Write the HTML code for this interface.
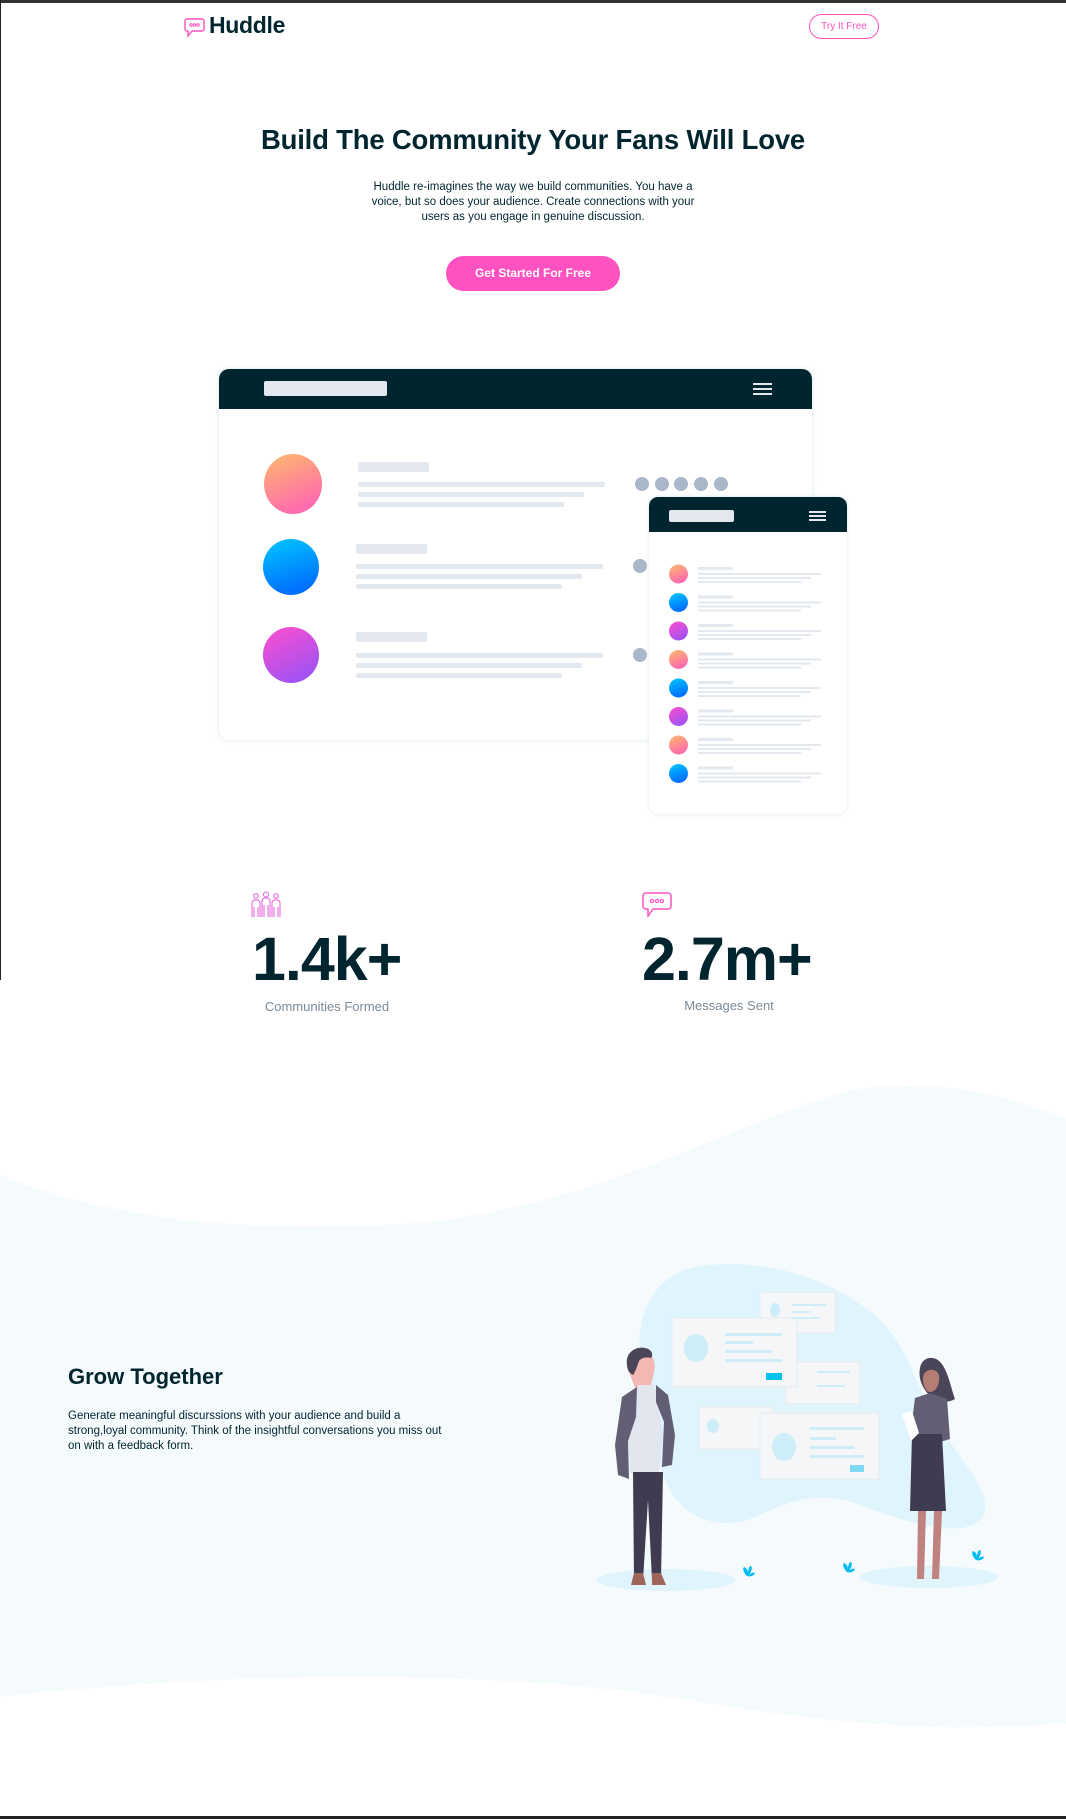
<!DOCTYPE html>
<html><head><meta charset="utf-8"><style>
*{margin:0;padding:0;box-sizing:border-box}
html,body{width:1066px;height:1819px;background:#fff;overflow:hidden;position:relative;font-family:"Liberation Sans",sans-serif;color:#00252e}
.a{position:absolute}
</style></head><body>
<svg class="a" style="left:0;top:0" width="1066" height="1819">
<path d="M0 1175 C120 1222 250 1232 400 1224 C600 1212 750 1110 864 1088 C950 1078 1010 1098 1066 1118 L1066 1724 C950 1730 870 1730 700 1702 C550 1676 300 1664 0 1697 Z" fill="#f5fafd"/>
<rect x="0" y="0" width="1066" height="3" fill="#333"/>
<rect x="0" y="0" width="1" height="980" fill="#222"/>
<rect x="0" y="1816" width="1066" height="3" fill="#222"/>
</svg>

<svg class="a" style="left:184px;top:17px" width="22" height="22" viewBox="0 0 22 22"><path d="M3 2h15a2 2 0 0 1 2 2v8a2 2 0 0 1-2 2H8l-4 5v-5H3a2 2 0 0 1-2-2V4a2 2 0 0 1 2-2z" fill="none" stroke="#ff52c1" stroke-width="1.4"/><circle cx="7" cy="8" r="1.2" fill="none" stroke="#ff52c1"/><circle cx="10.5" cy="8" r="1.2" fill="none" stroke="#ff52c1"/><circle cx="14" cy="8" r="1.2" fill="none" stroke="#ff52c1"/></svg>
<div class="a" style="left:209px;top:12px;font-size:23px;font-weight:bold;letter-spacing:-0.3px">Huddle</div>
<div class="a" style="left:809px;top:14px;width:70px;height:25px;border:1px solid #ff52c1;border-radius:13px;color:#ff52c1;font-size:10px;text-align:center;line-height:23px">Try It Free</div>

<div class="a" style="left:0;width:1066px;top:124px;text-align:center;font-size:27.5px;font-weight:bold;letter-spacing:-0.2px">Build The Community Your Fans Will Love</div>
<div class="a" style="left:358px;width:350px;top:180px;text-align:center;font-size:11.5px;line-height:15px;color:#00252e">Huddle re-imagines the way we build communities. You have a voice, but so does your audience. Create connections with your users as you engage in genuine discussion.</div>
<div class="a" style="left:446px;top:256px;width:174px;height:35px;background:#ff52c1;border-radius:18px;color:#fff;font-size:12px;font-weight:bold;text-align:center;line-height:35px">Get Started For Free</div>

<svg class="a" style="left:0;top:0" width="1066" height="900">
<defs>
<linearGradient id="g1" x1="0" y1="0" x2="0.4" y2="1"><stop offset="0" stop-color="#ffba6b"/><stop offset="1" stop-color="#ff6bad"/></linearGradient>
<linearGradient id="g2" x1="0" y1="0" x2="0.3" y2="1"><stop offset="0" stop-color="#00c7ff"/><stop offset="1" stop-color="#0070ff"/></linearGradient>
<linearGradient id="g3" x1="0" y1="0" x2="0.5" y2="1"><stop offset="0" stop-color="#ff4fcc"/><stop offset="1" stop-color="#a352f3"/></linearGradient>
<filter id="sh" x="-5%" y="-5%" width="110%" height="110%"><feDropShadow dx="0" dy="0" stdDeviation="2" flood-color="#cfe0e8" flood-opacity="0.8"/></filter>
</defs>
<g filter="url(#sh)"><rect x="219" y="369" width="593" height="371" rx="10" fill="#fff"/></g>
<path d="M229 369h573a10 10 0 0 1 10 10v30H219v-30a10 10 0 0 1 10-10z" fill="#00252e"/>
<rect x="264" y="381" width="123" height="15" rx="2" fill="#e3e8ee"/>
<g fill="#e3e8ee"><rect x="753" y="383" width="19" height="2"/><rect x="753" y="388" width="19" height="2"/><rect x="753" y="393" width="19" height="2"/></g>
<ellipse cx="293" cy="484" rx="29" ry="30" fill="url(#g1)"/>
<ellipse cx="291" cy="567" rx="28" ry="28" fill="url(#g2)"/>
<ellipse cx="291" cy="655" rx="28" ry="28" fill="url(#g3)"/>
<g fill="#e3e8ee">
<rect x="358" y="462" width="71" height="10" rx="2"/><rect x="358" y="482" width="247" height="5" rx="2"/><rect x="358" y="492" width="226" height="5" rx="2"/><rect x="358" y="502" width="206" height="5" rx="2"/>
<rect x="356" y="544" width="71" height="10" rx="2"/><rect x="356" y="564" width="247" height="5" rx="2"/><rect x="356" y="574" width="226" height="5" rx="2"/><rect x="356" y="584" width="206" height="5" rx="2"/>
<rect x="356" y="632" width="71" height="10" rx="2"/><rect x="356" y="653" width="247" height="5" rx="2"/><rect x="356" y="663" width="226" height="5" rx="2"/><rect x="356" y="673" width="206" height="5" rx="2"/>
</g>
<g fill="#a9b8c8"><circle cx="642" cy="484" r="7"/><circle cx="662" cy="484" r="7"/><circle cx="681" cy="484" r="7"/><circle cx="701" cy="484" r="7"/><circle cx="721" cy="484" r="7"/><circle cx="640" cy="566" r="7"/><circle cx="640" cy="655" r="7"/></g>
<g filter="url(#sh)"><rect x="649" y="497" width="198" height="317" rx="9" fill="#fff"/></g>
<path d="M658 497h180a9 9 0 0 1 9 9v26H649v-26a9 9 0 0 1 9-9z" fill="#00252e"/>
<rect x="669" y="510" width="65" height="12" rx="2" fill="#e3e8ee"/>
<g fill="#e3e8ee"><rect x="809" y="511" width="17" height="2"/><rect x="809" y="515" width="17" height="2"/><rect x="809" y="519" width="17" height="2"/></g>
<circle cx="678.5" cy="574" r="9.5" fill="url(#g1)"/>
<circle cx="678.5" cy="602.5" r="9.5" fill="url(#g2)"/>
<circle cx="678.5" cy="631" r="9.5" fill="url(#g3)"/>
<circle cx="678.5" cy="659.5" r="9.5" fill="url(#g1)"/>
<circle cx="678.5" cy="688" r="9.5" fill="url(#g2)"/>
<circle cx="678.5" cy="716.5" r="9.5" fill="url(#g3)"/>
<circle cx="678.5" cy="745" r="9.5" fill="url(#g1)"/>
<circle cx="678.5" cy="773.5" r="9.5" fill="url(#g2)"/>
<g fill="#e3e8ee">
<rect x="698" y="567" width="35" height="3"/><rect x="698" y="573" width="123" height="2"/><rect x="698" y="577" width="113" height="2"/><rect x="698" y="581" width="103" height="2"/>
<rect x="698" y="595.5" width="35" height="3"/><rect x="698" y="601.5" width="123" height="2"/><rect x="698" y="605.5" width="113" height="2"/><rect x="698" y="609.5" width="103" height="2"/>
<rect x="698" y="624" width="35" height="3"/><rect x="698" y="630" width="123" height="2"/><rect x="698" y="634" width="113" height="2"/><rect x="698" y="638" width="103" height="2"/>
<rect x="698" y="652.5" width="35" height="3"/><rect x="698" y="658.5" width="123" height="2"/><rect x="698" y="662.5" width="113" height="2"/><rect x="698" y="666.5" width="103" height="2"/>
<rect x="698" y="681" width="35" height="3"/><rect x="698" y="687" width="123" height="2"/><rect x="698" y="691" width="113" height="2"/><rect x="698" y="695" width="103" height="2"/>
<rect x="698" y="709.5" width="35" height="3"/><rect x="698" y="715.5" width="123" height="2"/><rect x="698" y="719.5" width="113" height="2"/><rect x="698" y="723.5" width="103" height="2"/>
<rect x="698" y="738" width="35" height="3"/><rect x="698" y="744" width="123" height="2"/><rect x="698" y="748" width="113" height="2"/><rect x="698" y="752" width="103" height="2"/>
<rect x="698" y="766.5" width="35" height="3"/><rect x="698" y="772.5" width="123" height="2"/><rect x="698" y="776.5" width="113" height="2"/><rect x="698" y="780.5" width="103" height="2"/>
</g>
</svg>

<svg class="a" style="left:251px;top:891px" width="30" height="27" viewBox="0 0 30 27" fill="none" stroke="#e35bd8" stroke-width="1">
<circle cx="5" cy="5" r="2.3"/><circle cx="15" cy="3.5" r="2.5"/><circle cx="25" cy="5" r="2.3"/>
<path d="M1 26V12a3 3 0 0 1 3-3h2a3 3 0 0 1 3 3v14M3 16v10M7 16v10"/>
<path d="M11 26V10a3 3 0 0 1 3-3h2a3 3 0 0 1 3 3v16M13 14v12M17 14v12"/>
<path d="M21 26V12a3 3 0 0 1 3-3h2a3 3 0 0 1 3 3v14M23 16v10M27 16v10"/>
</svg>
<svg class="a" style="left:642px;top:892px" width="30" height="25" viewBox="0 0 30 25"><path d="M4 1h22a3 3 0 0 1 3 3v10a3 3 0 0 1-3 3H11l-5 7v-7H4a3 3 0 0 1-3-3V4a3 3 0 0 1 3-3z" fill="none" stroke="#ff52c1" stroke-width="1.5"/><circle cx="10" cy="9" r="1.6" fill="none" stroke="#ff52c1" stroke-width="1.2"/><circle cx="15" cy="9" r="1.6" fill="none" stroke="#ff52c1" stroke-width="1.2"/><circle cx="20" cy="9" r="1.6" fill="none" stroke="#ff52c1" stroke-width="1.2"/></svg>
<div class="a" style="left:252px;top:924px;font-size:61px;font-weight:bold;letter-spacing:-1px">1.4k+</div>
<div class="a" style="left:642px;top:924px;font-size:61px;font-weight:bold;letter-spacing:-1px">2.7m+</div>
<div class="a" style="left:227px;width:200px;top:999px;text-align:center;font-size:13px;color:#7c8a96">Communities Formed</div>
<div class="a" style="left:629px;width:200px;top:998px;text-align:center;font-size:13px;color:#7c8a96">Messages Sent</div>

<div class="a" style="left:68px;top:1364px;font-size:22px;font-weight:bold">Grow Together</div>
<div class="a" style="left:68px;top:1409px;width:384px;font-size:11.5px;line-height:15px">Generate meaningful discurssions with your audience and build a strong,loyal community. Think of the insightful conversations you miss out on with a feedback form.</div>

<svg class="a" style="left:0;top:0" width="1066" height="1819">
<path d="M700 1266 C760 1258 830 1275 880 1320 C910 1350 915 1385 935 1420 C960 1460 1000 1500 980 1520 C960 1540 900 1520 860 1505 C820 1490 790 1500 760 1515 C730 1530 690 1525 670 1490 C650 1455 660 1420 645 1380 C630 1330 645 1275 700 1266Z" fill="#dff4fd"/>
<ellipse cx="666" cy="1580" rx="69" ry="11" fill="#dff4fd"/>
<ellipse cx="929" cy="1577" rx="69" ry="11" fill="#dff4fd"/>
<g fill="#f4f6f7" stroke="#e6ecef"><rect x="760" y="1292" width="75" height="41"/><rect x="786" y="1362" width="74" height="42"/><rect x="699" y="1407" width="74" height="42"/><rect x="672" y="1318" width="125" height="69"/><rect x="760" y="1413" width="119" height="66"/></g>
<g fill="#cdeef9"><ellipse cx="696" cy="1348" rx="12" ry="14"/><ellipse cx="784" cy="1447" rx="12" ry="14"/><ellipse cx="775" cy="1310" rx="5" ry="7"/><ellipse cx="713" cy="1426" rx="6" ry="7"/>
<rect x="725" y="1333" width="57" height="3"/><rect x="725" y="1341" width="28" height="3"/><rect x="725" y="1350" width="47" height="3"/><rect x="725" y="1359" width="57" height="3"/>
<rect x="810" y="1427" width="54" height="3"/><rect x="810" y="1437" width="26" height="3"/><rect x="810" y="1446" width="44" height="3"/><rect x="810" y="1455" width="54" height="3"/>
<rect x="792" y="1304" width="34" height="2"/><rect x="792" y="1311" width="18" height="2"/><rect x="792" y="1317" width="28" height="2"/><rect x="817" y="1371" width="33" height="2"/><rect x="817" y="1385" width="28" height="2"/></g>
<rect x="766" y="1373" width="16" height="7" fill="#00c2f0"/><rect x="850" y="1465" width="14" height="7" fill="#7fd9f5"/>
<path d="M628 1370c0-14 10-20 18-18 8 2 10 12 8 20l-4 18h-14z" fill="#f3b8b3"/>
<path d="M627 1365c-2-12 8-19 18-17 6 1 9 6 6 10-4-1-9-1-12 3-2 5-3 10-6 14-4-2-6-6-6-10z" fill="#4a4558"/>
<path d="M638 1385h17l8 50-4 38h-29l-2-40z" fill="#e2e7ef"/>
<path d="M637 1387l-15 10-7 48 3 30 11 4-1-38 8-24zM656 1385l12 10 7 40-3 30-10 2 2-45-8-20z" fill="#625f74"/>
<path d="M633 1472h30l-2 108h-9l-4-80-5 80h-9z" fill="#3f3b50"/>
<path d="M634 1573h9l3 12h-15zM652 1573h9l5 12h-14z" fill="#a0655a"/>
<path d="M920 1368c2-12 15-13 21-5 7 8 10 25 14 36-8 5-20 3-25-3-8-8-12-18-10-28z" fill="#4a4558"/>
<path d="M923 1378c0-9 14-12 16-2 1 8-3 16-9 16-4 0-7-6-7-14z" fill="#b57e75"/>
<path d="M915 1398l15-5 17 6 3 40-10 3h-22l-7-12z" fill="#625f74"/>
<path d="M912 1434h30l4 77h-36z" fill="#3f3b50"/>
<path d="M902 1414l10-3 7 22-8 8z" fill="#fff"/>
<path d="M918 1511h8l-2 68h-7zM934 1511h8l-3 68h-7z" fill="#c0827e"/>
<g fill="#00bcf2"><path d="M747 1576c-3-3-5-7-3-9 3 1 4 4 4 6 0-3 1-7 3-7 2 2 0 6-2 9 2-2 4-3 6-2-1 3-5 4-8 3z"/><path d="M847 1572c-3-3-5-7-3-9 3 1 4 4 4 6 0-3 1-7 3-7 2 2 0 6-2 9 2-2 4-3 6-2-1 3-5 4-8 3z"/><path d="M976 1560c-3-3-5-7-3-9 3 1 4 4 4 6 0-3 1-7 3-7 2 2 0 6-2 9 2-2 4-3 6-2-1 3-5 4-8 3z"/></g>
</svg>
</body></html>
